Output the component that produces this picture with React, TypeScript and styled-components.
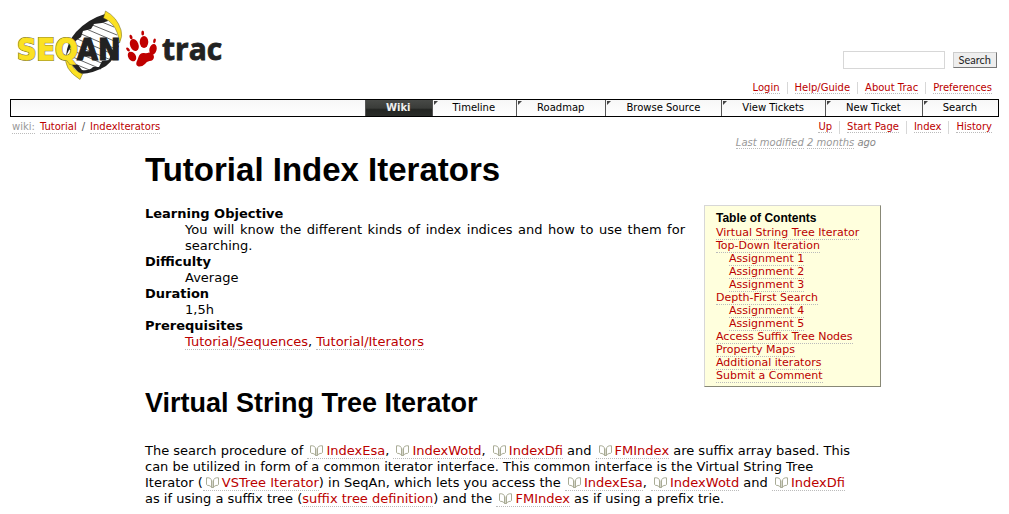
import React from 'react';
import styled, { createGlobalStyle } from 'styled-components';

const GlobalStyle = createGlobalStyle`
  body {
    margin: 10px 10px 0;
    background: #fff;
    color: #000;
    font: 13px/16px Verdana, "DejaVu Sans", sans-serif;
  }
`;

const DottedLink = styled.a`
  color: #b00;
  text-decoration: none;
  border-bottom: 1px dotted #bbb;
`;

const Header = styled.header`
  display: flex;
  justify-content: space-between;
  align-items: flex-start;
  margin-bottom: 1px;
`;

const Logo = styled.svg`
  display: block;
  width: 220px;
  height: 71px;
  font-weight: bold;
`;

const SearchForm = styled.form`
  display: flex;
  align-items: center;
  gap: 8px;
  padding: 41px 2px 0 0;
`;

const SearchInput = styled.input`
  box-sizing: border-box;
  width: 102px;
  height: 18px;
  border: 1px solid #d7d7d7;
  margin: 0;
`;

const SearchButton = styled.button`
  box-sizing: border-box;
  height: 16px;
  padding: 0 5px;
  border: 1px solid;
  border-color: #ccc #777 #777 #ccc;
  background: #eee;
  color: #222;
  font: 11px/14px Lato, sans-serif;
`;

const LinkBar = styled.ul`
  display: flex;
  justify-content: flex-end;
  list-style: none;
  margin: 0;
  padding: 0 7px 0 0;
  font-size: 10px;
  line-height: 12px;

  li {
    padding: 0 0 0 7px;
  }
  li + li {
    margin-left: 7px;
    border-left: 1px solid #d7d7d7;
  }
`;

const MainNav = styled.nav`
  margin-top: 5px;
  border: 1px solid #000;
  background: linear-gradient(#f7f7f7, #fff);

  ul {
    display: flex;
    justify-content: flex-end;
    list-style: none;
    margin: 0;
    padding: 0;
  }
`;

const Tab = styled.a<{ $active?: boolean }>`
  display: block;
  position: relative;
  padding: 0 21px 0 20px;
  border-left: 1px solid #555;
  font-size: 10px;
  line-height: 16px;
  text-decoration: none;
  color: ${(p) => (p.$active ? '#eee' : '#000')};
  font-weight: ${(p) => (p.$active ? 'bold' : 'normal')};
  background: ${(p) => (p.$active ? 'linear-gradient(#484a47, #3a3c39 50%, #232522 60%, #2a2c29)' : 'none')};

  &::before {
    content: '';
    display: ${(p) => (p.$active ? 'none' : 'block')};
    position: absolute;
    left: 1px;
    top: 1px;
    border-top: 4px solid #444;
    border-right: 4px solid transparent;
  }
`;

const ContextRow = styled.div`
  display: flex;
  justify-content: space-between;
  padding-top: 4px;
`;

const Path = styled.nav`
  display: flex;
  gap: 5px;
  padding-left: 2px;
  font-size: 10px;
  line-height: 12px;
  color: #555;
`;

const MutedLink = styled(DottedLink)`
  color: #999;
`;

const Main = styled.main`
  margin: 2px 118px 0 135px;
`;

const Modified = styled.p`
  margin: 0 5px 0 0;
  font-size: 10px;
  line-height: 13px;
  font-style: italic;
  text-align: right;
  color: #888;
`;

const Title = styled.h1`
  margin: 2px 0 16px;
  font: bold 33px/38px Arial, "Liberation Sans", sans-serif;
`;

const Heading = styled.h2`
  margin: 0 0 24px;
  font: bold 27px/32px Arial, "Liberation Sans", sans-serif;
`;

const Intro = styled.div`
  display: flex;
  align-items: flex-start;
  justify-content: space-between;
  gap: 19px;
`;

const Facts = styled.dl`
  margin: 0;
  padding-top: 1px;
  flex: 1;

  dt {
    font-weight: bold;
  }
  dd {
    margin: 0 0 0 40px;
    text-align: justify;
  }
`;

const Toc = styled.nav`
  box-sizing: border-box;
  min-width: 177px;
  border: 1px solid;
  border-color: #d7d7d7 #888876 #888876 #d7d7d7;
  background: #ffffdd;
  padding: 5px 11px 4px;
  font-size: 11px;
  line-height: 13px;

  h4 {
    margin: 0;
    font: bold 12px/15px Arial, "Liberation Sans", sans-serif;
  }
  ol {
    list-style: none;
    margin: 0;
    padding: 0;
  }
  ol ol {
    padding-left: 13px;
  }
`;

const Paragraph = styled.p`
  margin: 0;
`;

const BookIcon = styled.svg`
  width: 13px;
  height: 11px;
  margin: 0 3px;
  vertical-align: -1px;
`;

const Api = ({ children }: { children: React.ReactNode }) => (
  <DottedLink href="#api">
    <BookIcon viewBox="0 0 13 11" fill="none" stroke="#a9ab95" aria-hidden="true">
      <path d="M4.500 1.500Q3 .5 .5 .8V7.500Q.8 8.500 3 8.500Q5 9 5.500 10.500M8.500 1.500Q10 .5 12.500 .8V7.500Q12.200 8.500 10 8.500Q8 9 7.500 10.500" />
      <path d="M4.500 1.500Q5.500 2.500 5.500 4V10.500H7.500V4Q7.500 2.500 8.500 1.500" />
      <path d="M6.500 3.500V10" stroke="#d5d6ca" />
    </BookIcon>
    {children}
  </DottedLink>
);

const condensed = '"DejaVu Sans Condensed", "DejaVu Sans", sans-serif';

const SeqAnLogo = () => (
  <Logo viewBox="10 10 220 71" role="img" aria-label="SeqAn trac">
    <path d="M67 54Q70 37 88 24L105 17L118 38Q120 50 108 62Q96 71 80 71Z" fill="#fff" />
    <g stroke="#222" strokeWidth=".7">
      <path d="M97 20L114 27M90 24L117 35M84 28L119 43M79 33L118 50M75 38L115 55M71 43L111 60M69 49L106 65M68 55L101 69M70 62L92 71" />
    </g>
    <path d="M105 14Q88 19 76 32Q67 42 66 56L69 50Q73 42 81 37L83 31L91 29L94 24Q101 24 108 21Z" fill="#222" />
    <path d="M119 45Q116 58 106 66Q95 73 80 74L71 64L78 65L82 70Q89 71 93 67L99 67L102 61L109 60L111 54Z" fill="#222" />
    <path d="M105.500 11Q117 17 121 30Q123 36 119.500 43Q118 31 113 25Q109 20 103.500 18Z" fill="#fbe122" stroke="#665f20" strokeWidth=".5" />
    <path d="M66 55Q63 69 80 79.500L82.500 74Q72 70 70 60Z" fill="#fbe122" stroke="#665f20" strokeWidth=".5" />
    <g fontFamily={condensed} fontSize="30">
      <text x="17" y="60" fill="#6e6930" stroke="#6e6930" strokeWidth="1.800">
        SEQ
      </text>
      <text x="17" y="60" fill="#fbe122" stroke="#fbe122" strokeWidth=".8" aria-hidden="true">
        SEQ
      </text>
      <text x="77" y="60" fill="#222" stroke="#222" strokeWidth="1.200">
        AN
      </text>
    </g>
    <g fill="#c00000">
      <path d="M136.500 62Q137.500 60 138.500 57Q140 52.500 144 53Q147 53.500 149 52.500Q153.500 52.500 154 57Q153.500 61 149.500 61Q146.500 61.500 145 64Q142 67 138.500 66.500Q135.500 65.500 136.500 62Z" />
      <ellipse cx="144" cy="42" rx="4.300" ry="6" />
      <ellipse cx="134.300" cy="45" rx="4.200" ry="6.200" transform="rotate(-22 134.300 45)" />
      <ellipse cx="153" cy="49.300" rx="3.600" ry="5.400" transform="rotate(15 153 49.300)" />
      <ellipse cx="132" cy="56.500" rx="3.800" ry="5.200" transform="rotate(-32 132 56.500)" />
      <ellipse cx="142.700" cy="33" rx="1.400" ry="2.500" />
      <ellipse cx="131" cy="37" rx="1.400" ry="2.400" transform="rotate(-20 131 37)" />
      <ellipse cx="154.500" cy="40.800" rx="1.300" ry="2.400" transform="rotate(12 154.500 40.800)" />
      <ellipse cx="128" cy="49.500" rx="1.300" ry="2.300" transform="rotate(-45 128 49.500)" />
    </g>
    <text x="162" y="60" fontFamily='"Open Sans", sans-serif' fontSize="30" fill="#222" stroke="#222" strokeWidth=".8">
      trac
    </text>
  </Logo>
);

const tabs = ['Wiki', 'Timeline', 'Roadmap', 'Browse Source', 'View Tickets', 'New Ticket', 'Search'];

const toc: { title: string; children?: string[] }[] = [
  { title: 'Virtual String Tree Iterator' },
  { title: 'Top-Down Iteration', children: ['Assignment 1', 'Assignment 2', 'Assignment 3'] },
  { title: 'Depth-First Search', children: ['Assignment 4', 'Assignment 5'] },
  { title: 'Access Suffix Tree Nodes' },
  { title: 'Property Maps' },
  { title: 'Additional iterators' },
  { title: 'Submit a Comment' },
];

const Links = ({ items }: { items: string[] }) => (
  <LinkBar>
    {items.map((t) => (
      <li key={t}>
        <DottedLink href="#nav">{t}</DottedLink>
      </li>
    ))}
  </LinkBar>
);

export default function App() {
  return (
    <>
      <GlobalStyle />
      <Header>
        <SeqAnLogo />
        <SearchForm>
          <SearchInput type="text" aria-label="Search query" />
          <SearchButton type="button">Search</SearchButton>
        </SearchForm>
      </Header>
      <Links items={['Login', 'Help/Guide', 'About Trac', 'Preferences']} />
      <MainNav>
        <ul>
          {tabs.map((t) => (
            <li key={t}>
              <Tab href="#tab" $active={t === 'Wiki'}>
                {t}
              </Tab>
            </li>
          ))}
        </ul>
      </MainNav>
      <ContextRow>
        <Path>
          <MutedLink href="#wiki">wiki:</MutedLink>
          <DottedLink href="#tutorial">Tutorial</DottedLink>
          <span>/</span>
          <DottedLink href="#iterators">IndexIterators</DottedLink>
        </Path>
        <Links items={['Up', 'Start Page', 'Index', 'History']} />
      </ContextRow>
      <Main>
        <Modified>
          <MutedLink href="#diff">Last modified</MutedLink> <MutedLink href="#timeline">2 months</MutedLink> ago
        </Modified>
        <Title>Tutorial Index Iterators</Title>
        <Intro>
          <Facts>
            <dt>Learning Objective</dt>
            <dd>You will know the different kinds of index indices and how to use them for searching.</dd>
            <dt>Difficulty</dt>
            <dd>Average</dd>
            <dt>Duration</dt>
            <dd>1,5h</dd>
            <dt>Prerequisites</dt>
            <dd>
              <DottedLink href="#sequences">Tutorial/Sequences</DottedLink>,{' '}
              <DottedLink href="#iterators">Tutorial/Iterators</DottedLink>
            </dd>
          </Facts>
          <Toc>
            <h4>Table of Contents</h4>
            <ol>
              {toc.map((e) => (
                <li key={e.title}>
                  <DottedLink href="#section">{e.title}</DottedLink>
                  {e.children && (
                    <ol>
                      {e.children.map((c) => (
                        <li key={c}>
                          <DottedLink href="#assignment">{c}</DottedLink>
                        </li>
                      ))}
                    </ol>
                  )}
                </li>
              ))}
            </ol>
          </Toc>
        </Intro>
        <Heading>Virtual String Tree Iterator</Heading>
        <Paragraph>
          The search procedure of <Api>IndexEsa</Api>, <Api>IndexWotd</Api>, <Api>IndexDfi</Api> and{' '}
          <Api>FMIndex</Api> are suffix array based. This
          <br />
          can be utilized in form of a common iterator interface. This common interface is the Virtual String Tree
          <br />
          Iterator (<Api>VSTree Iterator</Api>) in SeqAn, which lets you access the <Api>IndexEsa</Api>,{' '}
          <Api>IndexWotd</Api> and <Api>IndexDfi</Api>
          <br />
          as if using a suffix tree (<DottedLink href="#definition">suffix tree definition</DottedLink>) and the{' '}
          <Api>FMIndex</Api> as if using a prefix trie.
        </Paragraph>
      </Main>
    </>
  );
}
